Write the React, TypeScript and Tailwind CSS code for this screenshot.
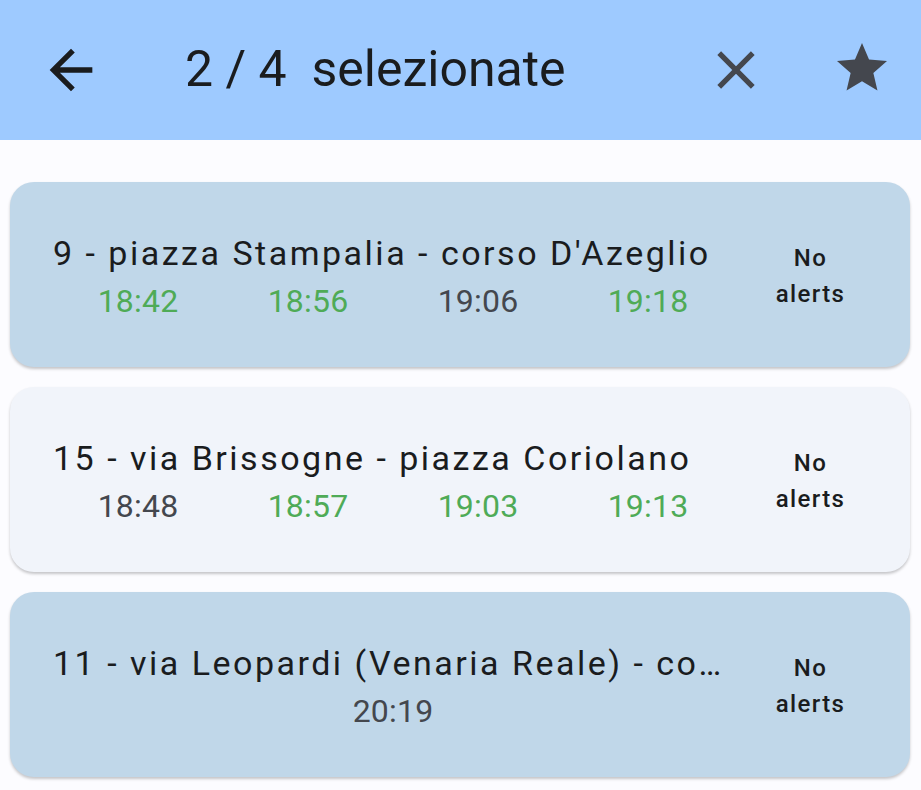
import React from "react";

type Time = { t: string; live: boolean };
type Line = { title: string; times: Time[]; selected: boolean };

const lines: Line[] = [
  {
    title: "9 - piazza Stampalia - corso D'Azeglio",
    times: [
      { t: "18:42", live: true },
      { t: "18:56", live: true },
      { t: "19:06", live: false },
      { t: "19:18", live: true },
    ],
    selected: true,
  },
  {
    title: "15 - via Brissogne - piazza Coriolano",
    times: [
      { t: "18:48", live: false },
      { t: "18:57", live: true },
      { t: "19:03", live: true },
      { t: "19:13", live: true },
    ],
    selected: false,
  },
  {
    title: "11 - via Leopardi (Venaria Reale) - corso Grosseto",
    times: [{ t: "20:19", live: false }],
    selected: true,
  },
];

function Card({ line }: { line: Line }) {
  return (
    <div
      className={`flex items-center h-[185px] rounded-[24px] pl-[43px] pr-[22px] shadow-[0_2px_3px_rgba(0,0,0,0.22)] ${
        line.selected ? "bg-[#c0d7e9]" : "bg-[#f1f4fa]"
      }`}
    >
      <div className="w-[680px] flex flex-col pt-[2px]">
        <div className="text-[34px] leading-[44px] tracking-[2.5px] text-[#1a1c1e] truncate pr-[6px]">
          {line.title}
        </div>
        <div className="flex mt-[6px]">
          {line.times.map((tm, i) => (
            <div
              key={i}
              className={`flex-1 text-center text-[32px] leading-[40px] tracking-[0.2px] ${
                tm.live ? "text-[#4fab57]" : "text-[#44474e]"
              }`}
            >
              {tm.t}
            </div>
          ))}
        </div>
      </div>
      <div className="flex-1 flex flex-col items-center text-[24px] leading-[36px] font-medium tracking-[1.4px] text-[#1a1c1e] pt-[3px]">
        <span>No</span>
        <span>alerts</span>
      </div>
    </div>
  );
}

export default function App() {
  return (
    <div
      className="w-[921px] h-[790px] bg-[#fcfcff] overflow-hidden"
      style={{ fontFamily: "Roboto, 'Noto Sans', sans-serif" }}
    >
      <div className="h-[140px] bg-[#9ecaff] flex items-center">
        <div className="w-[185px] flex items-center pl-[39px]">
          <svg width="64" height="64" viewBox="0 0 24 24" fill="#1a1c1e">
            <path d="M20 11H7.83l5.59-5.59L12 4l-8 8 8 8 1.41-1.41L7.83 13H20v-2z" />
          </svg>
        </div>
        <div className="flex-1 text-[50px] leading-[56px] text-[#1a1c1e] pb-[2px]">
          2 / 4&nbsp; selezionate
        </div>
        <div className="flex items-center gap-[64px] pr-[29px]">
          <svg width="64" height="64" viewBox="0 0 24 24" fill="#44474e">
            <path d="M19 6.41L17.59 5 12 10.59 6.41 5 5 6.41 10.59 12 5 17.59 6.41 19 12 13.41 17.59 19 19 17.59 13.41 12z" />
          </svg>
          <svg width="60" height="60" viewBox="0 0 24 24" fill="#44474e" className="mb-[4px]">
            <path d="M12 17.27L18.18 21l-1.64-7.03L22 9.24l-7.19-.61L12 2 9.19 8.63 2 9.24l5.46 4.73L5.82 21z" />
          </svg>
        </div>
      </div>
      <div className="flex flex-col gap-[20px] pt-[42px] pl-[10px] pr-[11px]">
        {lines.map((l, i) => (
          <Card key={i} line={l} />
        ))}
      </div>
    </div>
  );
}
